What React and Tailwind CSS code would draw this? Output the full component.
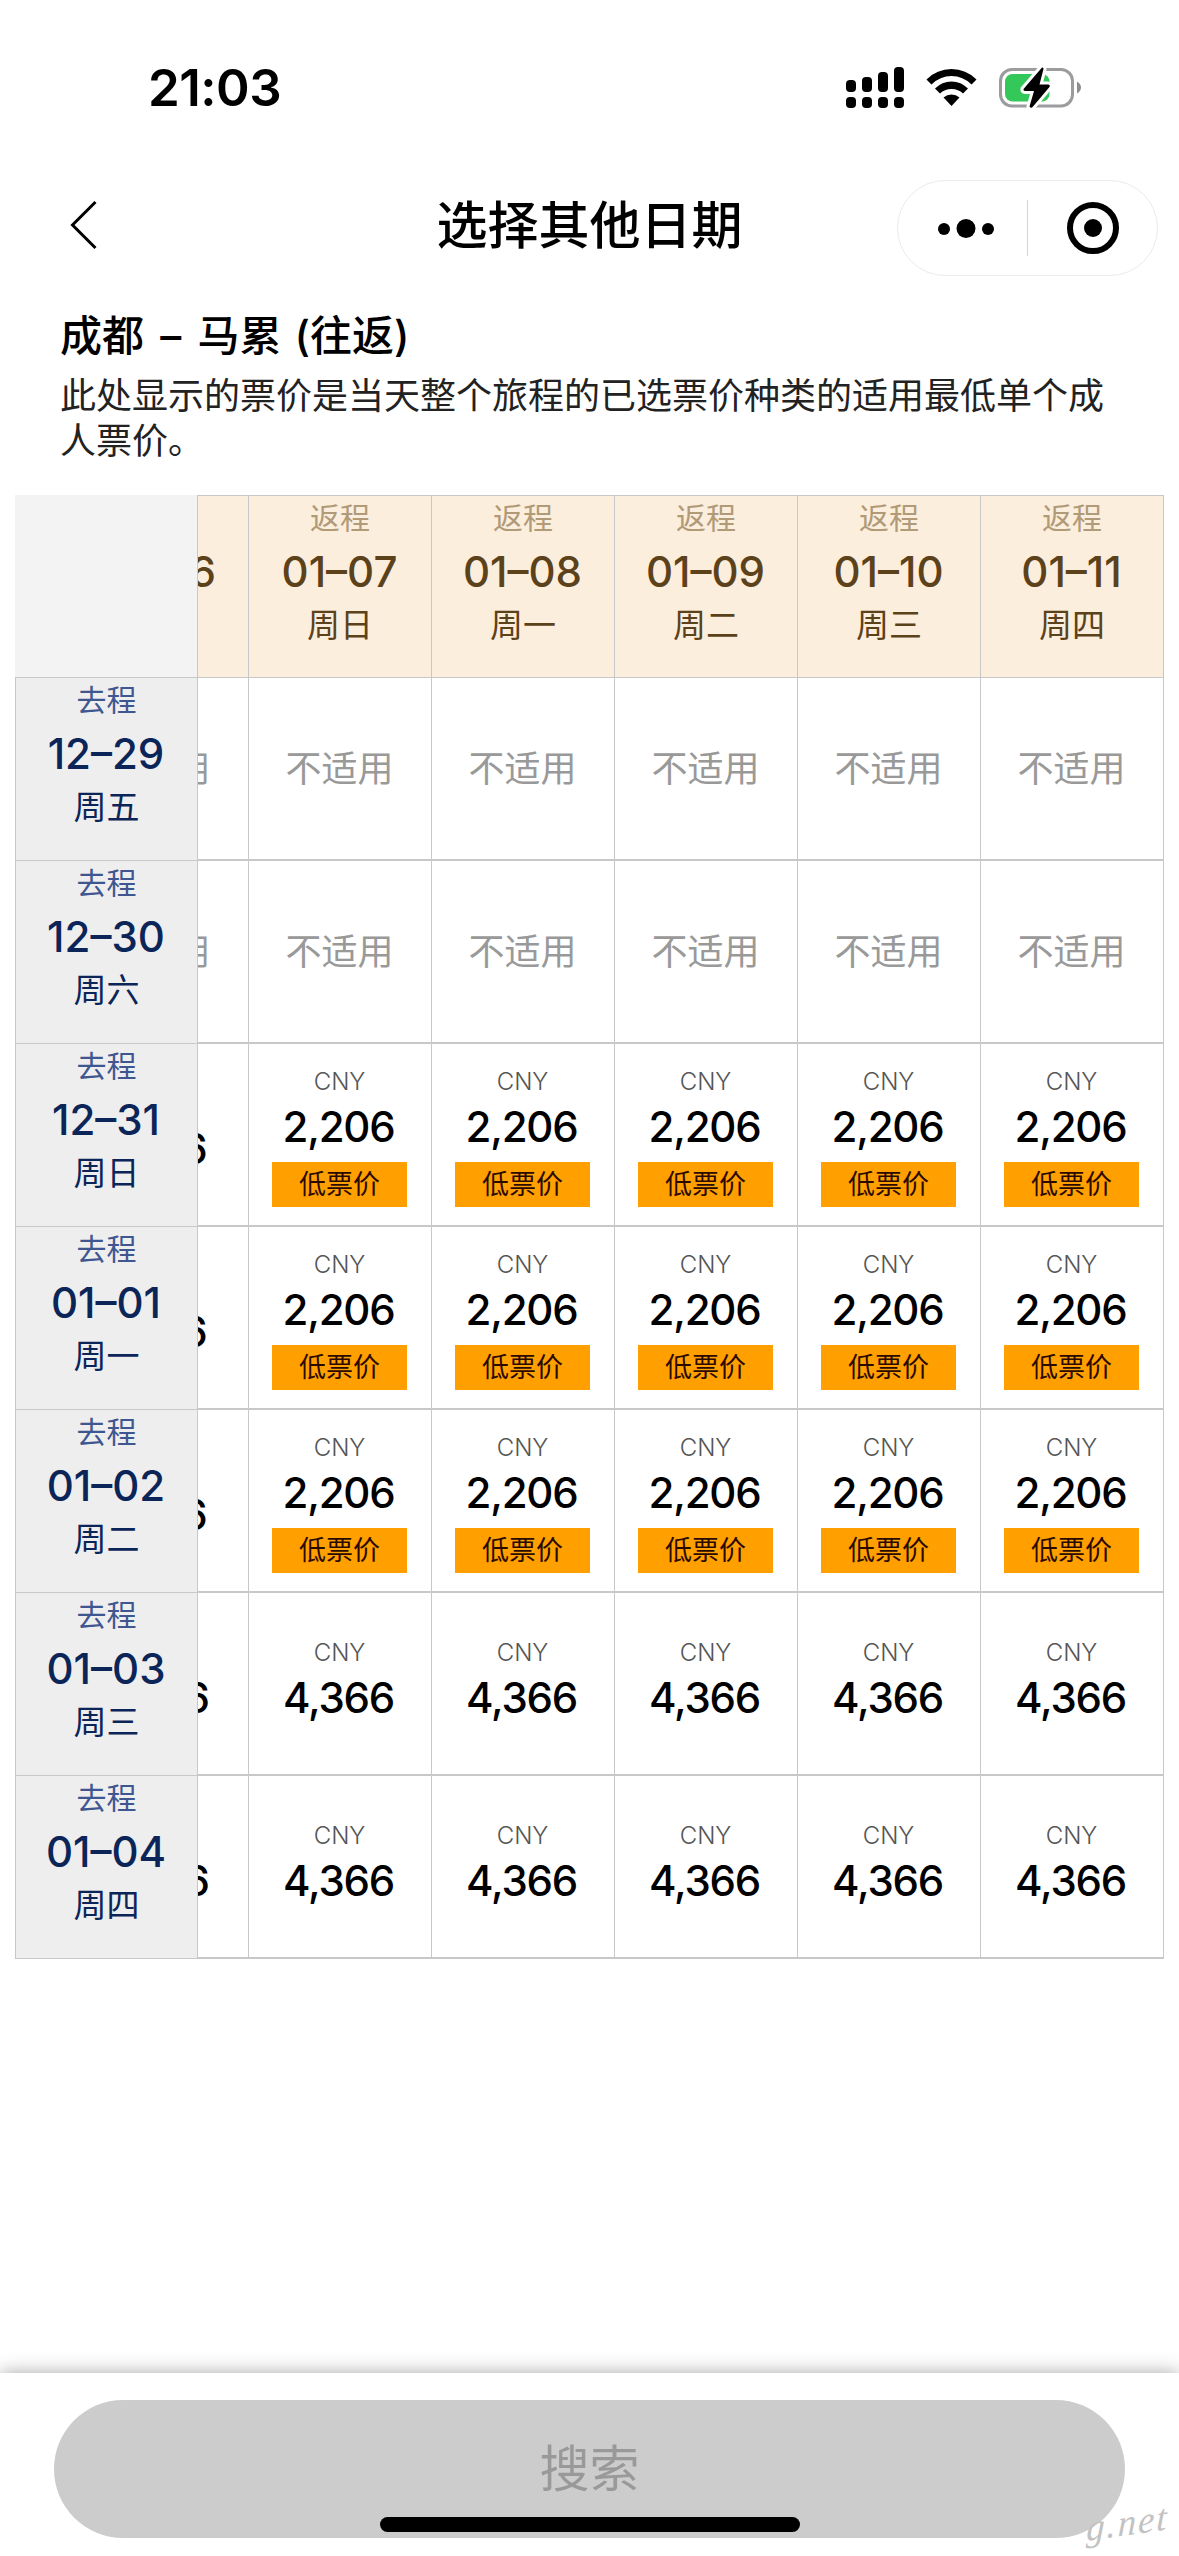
import React from "react";
import clsx from "clsx";

const returnDates = [
  { date: "01–06", day: "周六" },
  { date: "01–07", day: "周日" },
  { date: "01–08", day: "周一" },
  { date: "01–09", day: "周二" },
  { date: "01–10", day: "周三" },
  { date: "01–11", day: "周四" },
];

const rows = [
  { date: "12–29", day: "周五", first: null, price: null },
  { date: "12–30", day: "周六", first: null, price: null },
  { date: "12–31", day: "周日", first: "3,016", price: "2,206", low: true },
  { date: "01–01", day: "周一", first: "3,016", price: "2,206", low: true },
  { date: "01–02", day: "周二", first: "3,016", price: "2,206", low: true },
  { date: "01–03", day: "周三", first: "5,376", price: "4,366" },
  { date: "01–04", day: "周四", first: "5,376", price: "4,366" },
];

const StatusBar = () => (
  <div className="flex h-[176px] shrink-0 items-start justify-between pr-[97px] pl-[148px]">
    <span className="mt-[56px] text-[51px] leading-[64px] font-semibold tracking-[-0.5px]">21:03</span>
    <svg className="mt-[64px] h-[48px] w-[238px]" viewBox="844 64 238 48">
      {/* Signal */}
      <rect x="846" y="80" width="10" height="12" rx="4" />
      <rect x="862" y="77" width="10" height="15" rx="4" />
      <rect x="878" y="72" width="10" height="20" rx="4" />
      <rect x="894" y="67" width="10" height="25" rx="4" />
      <rect x="846" y="97" width="10" height="11" rx="4" />
      <rect x="862" y="97" width="10" height="11" rx="4" />
      <rect x="878" y="97" width="10" height="11" rx="4" />
      <rect x="894" y="97" width="10" height="11" rx="4" />
      {/* Wifi */}
      <path d="M926.500 79.500Q937 69 951.500 69T976.500 79.500L971.500 84.500Q963 76 951.500 76T931.500 84.500Z" />
      <path d="M935 88.500Q942 81.500 951.500 81.500T968 88.500L963 93.500Q958.500 89 951.500 89T940 93.500Z" />
      <path d="M943.500 97.500Q947 94.500 951.500 94.500T959.500 97.500L951.500 106Z" />
      {/* Battery */}
      <rect x="1000.500" y="69.500" width="72" height="36.500" rx="11.500" fill="none" stroke="#9c9c9f" strokeWidth="3" />
      <path d="M1077 81.500Q1081 84 1081 87.500T1077 93.500Z" fill="#8e8e91" />
      <rect x="1005" y="74" width="44.500" height="27.500" rx="7.500" fill="#34c759" />
      <path
        d="M1042 67.500L1023.500 89Q1023 91 1025 91H1034L1029.500 106.500Q1031 109 1033 106.500L1049.500 87Q1050.500 84.500 1048 84.500H1039.500L1043.500 69Q1043.500 67 1042 67.500Z"
        stroke="white"
        strokeWidth="6"
        paintOrder="stroke"
      />
    </svg>
  </div>
);

const NavBar = () => (
  <div className="grid h-[104px] shrink-0 grid-cols-[1fr_auto_1fr] items-center px-[21px]">
    <svg className="-mt-[6px] ml-[49px] h-[50px] w-[30px]" viewBox="0 0 30 50" fill="none" stroke="black" strokeWidth="3">
      <path d="M25.500 2L2.500 25L25.500 48" />
    </svg>
    <h1 className="-mt-[4px] text-[51px] leading-[60px] font-medium">选择其他日期</h1>
    <div className="flex h-[96px] w-[261px] items-center justify-self-end rounded-full border border-[#ebebeb]">
      <svg className="h-[94px] w-[259px]" viewBox="898 181 259 94">
        <circle cx="944" cy="229" r="6" />
        <circle cx="966" cy="228.500" r="9.500" />
        <circle cx="988" cy="229" r="6" />
        <path d="M1027.500 200V256" stroke="#d4d4d4" />
        <circle cx="1093" cy="228" r="23" fill="none" stroke="black" strokeWidth="6" />
        <circle cx="1093" cy="228" r="9" />
      </svg>
    </div>
  </div>
);

const DateLabel = ({ label, date, day, labelClass }) => (
  <div className="flex flex-col items-center pt-[2px] whitespace-nowrap">
    <span className={clsx("text-[30px] leading-[40px]", labelClass)}>{label}</span>
    <span className="mt-[9px] pr-[1px] text-[42px] leading-[50px] font-medium">{date}</span>
    <span className="mt-[5px] text-[33px] leading-[46px]">{day}</span>
  </div>
);

const FareCell = ({ price, low }) => {
  if (!price) {
    return <span className="text-[36px] leading-[52px] text-[#999999]">不适用</span>;
  }
  return (
    <div className={clsx("flex flex-col items-center", low ? "pt-[5px]" : "pb-[7px]")}>
      <span className="text-[24px] leading-[30px] font-light text-[#555555]">CNY</span>
      <span className="mt-[5px] pr-[2px] text-[42px] leading-[50px] font-medium tracking-[-1.2px]">{price}</span>
      {low && (
        <span className="mt-[10px] flex h-[45px] w-[135px] items-center justify-center bg-[#ffa000] text-[27px] leading-[45px] text-[#2b0a00]">
          低票价
        </span>
      )}
    </div>
  );
};

const FareTable = () => (
  <div className="mx-[15px] mt-[31px] flex h-[1464px] w-[1149px] shrink-0">
    <div className="w-[182px] shrink-0">
      <div className="h-[182px] bg-[#f3f3f3]" />
      {rows.map((row) => (
        <div key={row.date} className="h-[183px] border-t border-l border-[#c6c8ca] bg-[#eeeeee] text-[#0b2558]">
          <DateLabel label="去程" date={row.date} day={row.day} labelClass="text-[#3f5791]" />
        </div>
      ))}
      <div className="border-t border-[#c6c8ca]" />
    </div>

    <div className="flex flex-1 justify-end overflow-hidden border-l border-[#c6c8ca]">
      {returnDates.map((col, i) => (
        <div key={col.date} className="w-[183px] shrink-0 border-r border-[#c6c8ca]">
          <div className="h-[183px] border-y border-[#c6c8ca] bg-[#fceedd] text-[#5c421a]">
            <DateLabel label="返程" date={col.date} day={col.day} labelClass="text-[#b09a77]" />
          </div>
          {rows.map((row) => (
            <div
              key={row.date}
              className="flex h-[183px] items-center justify-center border-b-2 border-[#c6c8ca] pr-[1px] whitespace-nowrap"
            >
              <FareCell price={i === 0 ? row.first : row.price} low={i > 0 && row.low} />
            </div>
          ))}
        </div>
      ))}
    </div>
  </div>
);

const App = () => {
  return (
    <div className="relative flex h-[2556px] w-[1179px] flex-col overflow-hidden bg-white font-['Inter','Noto_Sans_CJK_SC',sans-serif] text-black">
      <StatusBar />
      <NavBar />

      <div className="mt-[28px] shrink-0 px-[60px]">
        <h2 className="text-[42px] leading-[56px] font-medium">
          成都 <span className="mx-[5px]">–</span> 马累 <span className="ml-[2px]">(往返)</span>
        </h2>
        <p className="mt-[10px] w-[1050px] text-[36px] leading-[45px] text-[#222222]">
          此处显示的票价是当天整个旅程的已选票价种类的适用最低单个成人票价。
        </p>
      </div>

      <FareTable />

      <div className="mt-auto h-[183px] shrink-0 px-[54px] pt-[27px] shadow-[0_0_18px_rgba(0,0,0,0.35)]">
        <button className="flex h-[138px] w-full items-center justify-center rounded-full bg-[#cccccc] text-[50px] text-[#999999]">
          搜索
        </button>
      </div>

      {/* Home indicator */}
      <div className="absolute bottom-[24px] left-[380px] h-[15px] w-[420px] rounded-full bg-black" />
      <span className="absolute right-[10px] bottom-[11px] -rotate-8 skew-x-[-10deg] font-['Liberation_Serif',serif] text-[37px] leading-[44px] tracking-[2px] text-[#c2c2c2] italic">
        g.net
      </span>
    </div>
  );
};

export default App;
